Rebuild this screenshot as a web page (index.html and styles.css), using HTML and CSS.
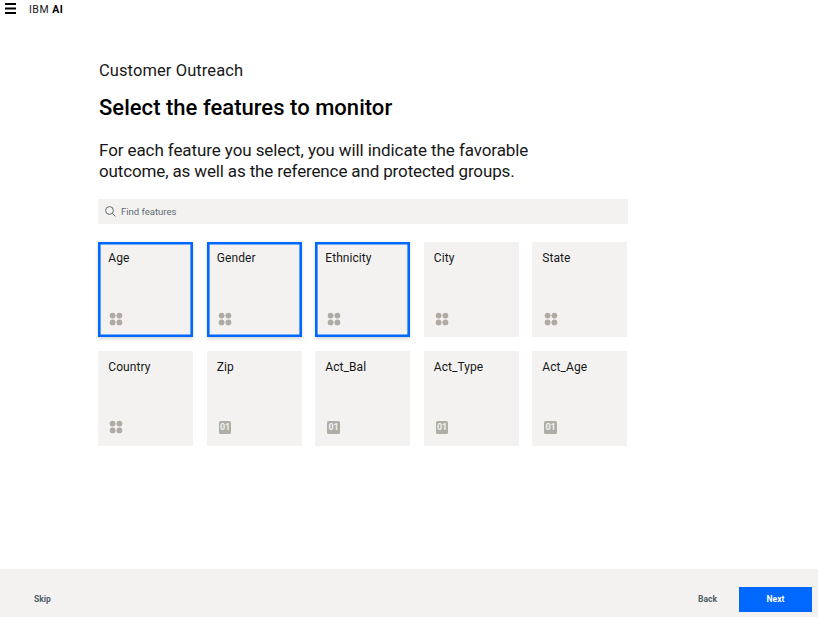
FILE: index.html
```html
<!DOCTYPE html>
<html lang="en">
<head>
<meta charset="utf-8">
<title>IBM AI</title>
<link rel="stylesheet" href="styles.css">
</head>
<body>
<svg width="0" height="0" class="defs" aria-hidden="true">
  <symbol id="dots" viewBox="0 0 14 14"><circle cx="3.6" cy="3.6" r="2.9"/><circle cx="10.4" cy="3.6" r="2.9"/><circle cx="3.6" cy="10.4" r="2.9"/><circle cx="10.4" cy="10.4" r="2.9"/></symbol>
</svg>
<header class="topbar">
  <svg class="menu" viewBox="0 0 11 11"><path d="M0 0h11v2H0zM0 4.5h11v2H0zM0 9h11v2H0z"/></svg>
  <span class="brand">IBM <b>AI</b></span>
</header>
<main class="content">
  <p class="project">Customer Outreach</p>
  <h1 class="title">Select the features to monitor</h1>
  <p class="intro"><span class="lead">For each feature you select, you will indicate the favorable</span><br>outcome, as well as the reference and protected groups.</p>
  <div class="search">
    <svg viewBox="0 0 11 11"><circle cx="4.5" cy="4.5" r="3.9"/><path d="M7.4 7.4L10.4 10.4"/></svg>
    <span>Find features</span>
  </div>
  <div class="grid">
    <div class="card selected"><span>Age</span><svg class="dots"><use href="#dots"/></svg></div>
    <div class="card selected"><span>Gender</span><svg class="dots"><use href="#dots"/></svg></div>
    <div class="card selected"><span>Ethnicity</span><svg class="dots"><use href="#dots"/></svg></div>
    <div class="card"><span>City</span><svg class="dots"><use href="#dots"/></svg></div>
    <div class="card"><span>State</span><svg class="dots"><use href="#dots"/></svg></div>
    <div class="card"><span>Country</span><svg class="dots"><use href="#dots"/></svg></div>
    <div class="card"><span>Zip</span><i class="num">01</i></div>
    <div class="card"><span>Act_Bal</span><i class="num">01</i></div>
    <div class="card"><span>Act_Type</span><i class="num">01</i></div>
    <div class="card"><span>Act_Age</span><i class="num">01</i></div>
  </div>
</main>
<footer class="footer">
  <span class="skip">Skip</span>
  <span class="back">Back</span>
  <span class="next">Next</span>
</footer>
</body>
</html>
```

FILE: styles.css
```css
* { box-sizing: border-box; }
body {
  margin: 0;
  height: 617px;
  overflow: hidden;
  display: flex;
  flex-direction: column;
  background: #fff;
  color: #171717;
  font-family: Roboto, "Open Sans", sans-serif;
}
.defs { position: absolute; }
.topbar { height: 20px; display: flex; align-items: flex-start; padding: 3px 5px; gap: 13px; }
.menu { width: 11px; height: 11px; fill: #000; }
.brand { padding-top: 1px; font-size: 10.5px; line-height: 12px; letter-spacing: .5px; color: #171717; }
.brand b { color: #000; }
.content { flex: 1; width: 530px; margin-left: 98px; padding-top: 40px; }
.project { margin: 0 1px; font-size: 16.5px; line-height: 22px; letter-spacing: .09px; }
.title { margin: 12px 1px 0; font-size: 22px; line-height: 28px; font-weight: 500; letter-spacing: .03px; color: #000; }
.intro { margin: 18px 1px 0; font-size: 17px; line-height: 21px; letter-spacing: -.14px; white-space: nowrap; }
.lead { letter-spacing: -.09px; }
.search {
  margin-top: 17px;
  height: 25px;
  display: flex;
  align-items: center;
  gap: 5px;
  padding-left: 7px;
  background: #f3f2f1;
  color: #5f6b73;
  font-size: 9.5px;
}
.search svg { width: 11px; height: 11px; fill: none; stroke: #5f6b73; stroke-width: 1; }
.grid {
  margin-top: 18px;
  display: grid;
  grid-template-columns: repeat(5, 95.4px);
  grid-auto-rows: 95px;
  column-gap: 13.13px;
  row-gap: 13.6px;
}
.card {
  display: flex;
  flex-direction: column;
  align-items: flex-start;
  justify-content: space-between;
  padding: 9px 10.3px 11.5px;
  background: #f3f2f1;
  font-size: 12px;
  line-height: 15px;
  letter-spacing: .06px;
}
.selected { box-shadow: inset 0 0 0 2.6px #0068ff, 0 2px 3px rgba(0,0,0,.16); }
.dots { width: 14px; height: 14px; margin-left: 1.2px; fill: #afaaa3; }
.num {
  width: 12.5px; height: 12.5px; margin: 0 0 .5px 2px;
  border-radius: 1.5px; background: #afaea6; color: #f3f2f1;
  font: 700 9px/12.5px Roboto, sans-serif; letter-spacing: 0; text-align: center;
}
.footer {
  height: 48px;
  display: flex;
  align-items: center;
  padding: 12px 6px 0 34px;
  background: #f3f2f1;
  color: #4f5d66;
  font-size: 8.5px;
  font-weight: 700;
}
.back { margin-left: auto; margin-right: 22px; }
.next {
  width: 73px; height: 25px;
  display: flex; align-items: center; justify-content: center;
  background: #0068ff; color: #fff;
}
```
